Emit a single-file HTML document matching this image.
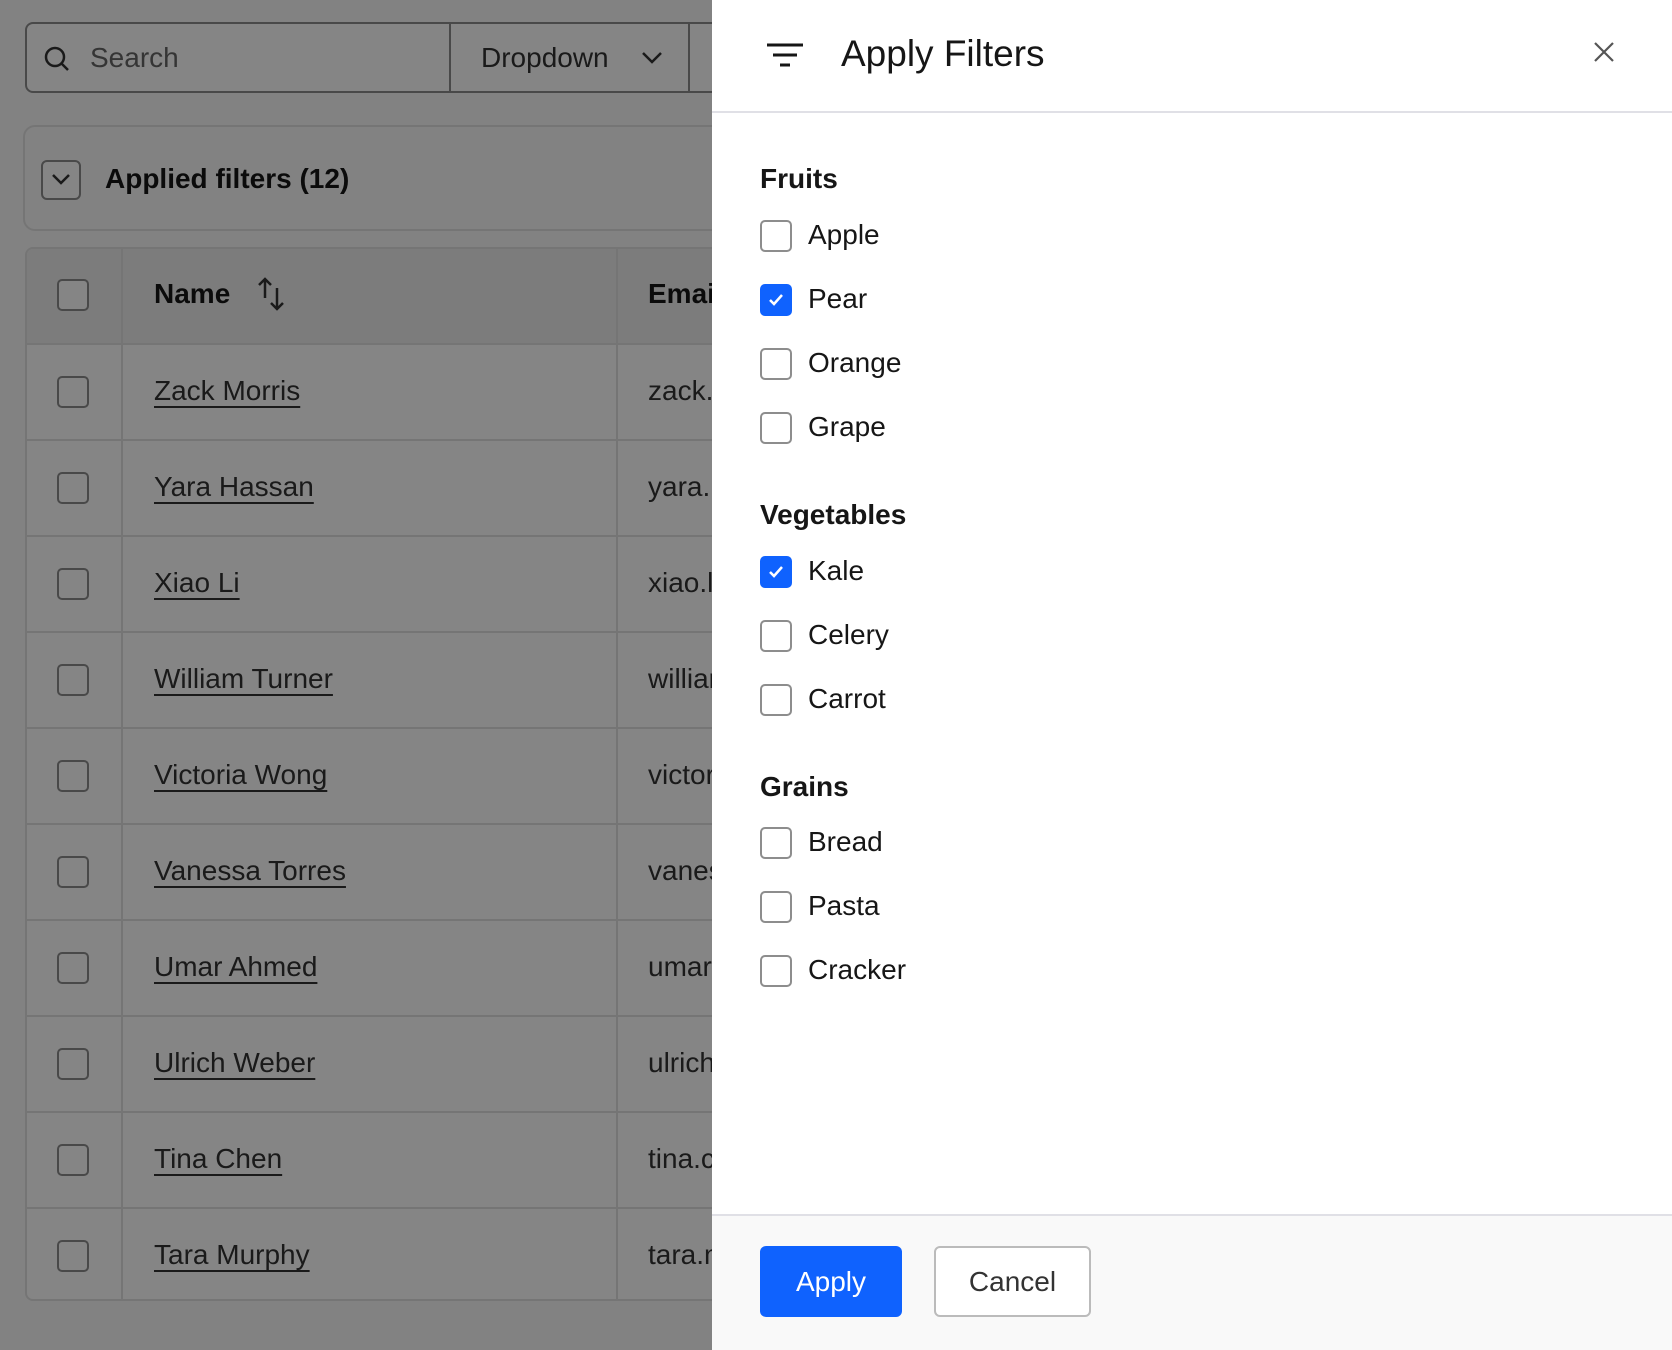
<!DOCTYPE html>
<html><head><meta charset="utf-8"><style>
*{box-sizing:border-box;margin:0;padding:0}
body{width:1672px;height:1350px;position:relative;overflow:hidden;background:#fafafa;font-family:"Liberation Sans",sans-serif;color:#161616}
.a{position:absolute}
.search{left:25px;top:22px;width:700px;height:71px;border:2px solid #8d8d8d;border-radius:8px;background:#fff}
.cb{width:32px;height:32px;border:2px solid #8d8d8d;border-radius:5px;background:#fff}
.tbl{left:25px;top:247px;width:720px;height:1054px;border:2px solid #e0e0e0;border-radius:8px;background:#fff;overflow:hidden}
.row{position:absolute;left:0;width:100%;height:96px;border-top:2px solid #e0e0e0}
.row .cb{position:absolute;left:30px;top:31px}
.row .n{position:absolute;left:127px;top:30px;font-size:28px;text-decoration:underline;text-underline-offset:6px;color:#333}
.row .e{position:absolute;left:621px;top:30px;font-size:28px;color:#333}
.ov{left:0;top:0;width:1672px;height:1350px;background:rgba(0,0,0,0.48)}
.panel{left:712px;top:0;width:960px;height:1350px;background:#fff}
.opt{position:absolute;left:48px;font-size:28px;color:#161616}
.opt .cb{position:absolute;left:0;top:-16px}
.opt span{position:absolute;left:48px;top:-17px;white-space:nowrap}
.hd{position:absolute;left:48px;font-size:28px;font-weight:bold;white-space:nowrap}
.chk{background:#0f62fe;border-color:#0f62fe}
</style></head><body>
<div class="a search">
 <svg class="a" style="left:16px;top:21px" width="28" height="28" viewBox="0 0 28 28"><circle cx="12" cy="12" r="9" fill="none" stroke="#333" stroke-width="2.5"/><path d="M18.5 18.5L25 25" stroke="#333" stroke-width="2.5"/></svg>
 <div class="a" style="left:63px;top:18px;font-size:28px;color:#666">Search</div>
 <div class="a" style="left:422px;top:0;height:67px;border-left:2px solid #8d8d8d"></div>
 <div class="a" style="left:454px;top:18px;font-size:28px;color:#333">Dropdown</div>
 <svg class="a" style="left:614px;top:24px" width="22" height="20" viewBox="0 0 22 20"><path d="M2 5l9 9 9-9" fill="none" stroke="#333" stroke-width="2.5"/></svg>
 <div class="a" style="left:661px;top:0;height:67px;border-left:2px solid #8d8d8d"></div>
</div>
<div class="a" style="left:23px;top:125px;width:720px;height:106px;border:2px solid #e0e0e0;border-radius:12px;background:#fafafa">
 <div class="a" style="left:16px;top:33px;width:40px;height:40px;border:2px solid #8d8d8d;border-radius:6px;background:#fff"></div>
 <svg class="a" style="left:24px;top:42px" width="24" height="20" viewBox="0 0 24 20"><path d="M4 6l8 8 8-8" fill="none" stroke="#333" stroke-width="2.5"/></svg>
 <div class="a" style="left:80px;top:36px;font-size:28px;font-weight:bold;white-space:nowrap">Applied filters (12)</div>
</div>
<div class="a tbl">
 <div class="a" style="left:0;top:0;width:100%;height:94px;background:#eeeeee"></div>
 <div class="a" style="left:94px;top:0;height:100%;border-left:2px solid #e0e0e0"></div>
 <div class="a" style="left:589px;top:0;height:100%;border-left:2px solid #e0e0e0"></div>
 <div class="a cb" style="left:30px;top:30px"></div>
 <div class="a" style="left:127px;top:29px;font-size:28px;font-weight:bold">Name</div>
 <svg class="a" style="left:230px;top:27px" width="30" height="36" viewBox="0 0 30 36"><path d="M8 22V3M2 9l6-6 6 6M20 12v21M14 27l6 6 6-6" fill="none" stroke="#333" stroke-width="2.5"/></svg>
 <div class="a" style="left:621px;top:29px;font-size:28px;font-weight:bold">Email</div>
 <div class="row" style="top:94px"><div class="cb"></div><div class="n">Zack Morris</div><div class="e">zack.morris</div></div>
 <div class="row" style="top:190px"><div class="cb"></div><div class="n">Yara Hassan</div><div class="e">yara.hassan</div></div>
 <div class="row" style="top:286px"><div class="cb"></div><div class="n">Xiao Li</div><div class="e">xiao.li</div></div>
 <div class="row" style="top:382px"><div class="cb"></div><div class="n">William Turner</div><div class="e">william</div></div>
 <div class="row" style="top:478px"><div class="cb"></div><div class="n">Victoria Wong</div><div class="e">victoria</div></div>
 <div class="row" style="top:574px"><div class="cb"></div><div class="n">Vanessa Torres</div><div class="e">vanessa</div></div>
 <div class="row" style="top:670px"><div class="cb"></div><div class="n">Umar Ahmed</div><div class="e">umar</div></div>
 <div class="row" style="top:766px"><div class="cb"></div><div class="n">Ulrich Weber</div><div class="e">ulrich</div></div>
 <div class="row" style="top:862px"><div class="cb"></div><div class="n">Tina Chen</div><div class="e">tina.chen</div></div>
 <div class="row" style="top:958px"><div class="cb"></div><div class="n">Tara Murphy</div><div class="e">tara.m</div></div>
</div>
<div class="a ov"></div>
<div class="a panel">
 <svg class="a" style="left:54px;top:43px" width="38" height="26" viewBox="0 0 38 26"><path d="M1 2h36M7 12h24M14 22h10" stroke="#161616" stroke-width="3"/></svg>
 <div class="a" style="left:129px;top:33px;font-size:37px;white-space:nowrap">Apply Filters</div>
 <svg class="a" style="left:881px;top:41px" width="22" height="22" viewBox="0 0 22 22"><path d="M2 2l18 18M20 2L2 20" stroke="#555" stroke-width="2.2"/></svg>
 <div class="a" style="left:0;top:111px;width:100%;border-top:2px solid #e0e0e6"></div>
 <div class="hd" style="top:163px">Fruits</div>
 <div class="opt" style="top:236px"><div class="cb"></div><span>Apple</span></div>
 <div class="opt" style="top:300px"><div class="cb chk"><svg width="28" height="28" viewBox="0 0 28 28" style="position:absolute;left:0;top:0"><path d="M8 14l4 4 8-9" fill="none" stroke="#fff" stroke-width="2.5"/></svg></div><span>Pear</span></div>
 <div class="opt" style="top:364px"><div class="cb"></div><span>Orange</span></div>
 <div class="opt" style="top:428px"><div class="cb"></div><span>Grape</span></div>
 <div class="hd" style="top:499px">Vegetables</div>
 <div class="opt" style="top:572px"><div class="cb chk"><svg width="28" height="28" viewBox="0 0 28 28" style="position:absolute;left:0;top:0"><path d="M8 14l4 4 8-9" fill="none" stroke="#fff" stroke-width="2.5"/></svg></div><span>Kale</span></div>
 <div class="opt" style="top:636px"><div class="cb"></div><span>Celery</span></div>
 <div class="opt" style="top:700px"><div class="cb"></div><span>Carrot</span></div>
 <div class="hd" style="top:771px">Grains</div>
 <div class="opt" style="top:843px"><div class="cb"></div><span>Bread</span></div>
 <div class="opt" style="top:907px"><div class="cb"></div><span>Pasta</span></div>
 <div class="opt" style="top:971px"><div class="cb"></div><span>Cracker</span></div>
 <div class="a" style="left:0;top:1214px;width:100%;height:136px;background:#f9f9f9;border-top:2px solid #e0e0e6"></div>
 <div class="a" style="left:48px;top:1246px;width:142px;height:71px;background:#0f62fe;border-radius:6px;color:#fff;font-size:28px;text-align:center;line-height:71px">Apply</div>
 <div class="a" style="left:222px;top:1246px;width:157px;height:71px;background:#fff;border:2px solid #bbb;border-radius:6px;color:#333;font-size:28px;text-align:center;line-height:67px">Cancel</div>
</div>
</body></html>
